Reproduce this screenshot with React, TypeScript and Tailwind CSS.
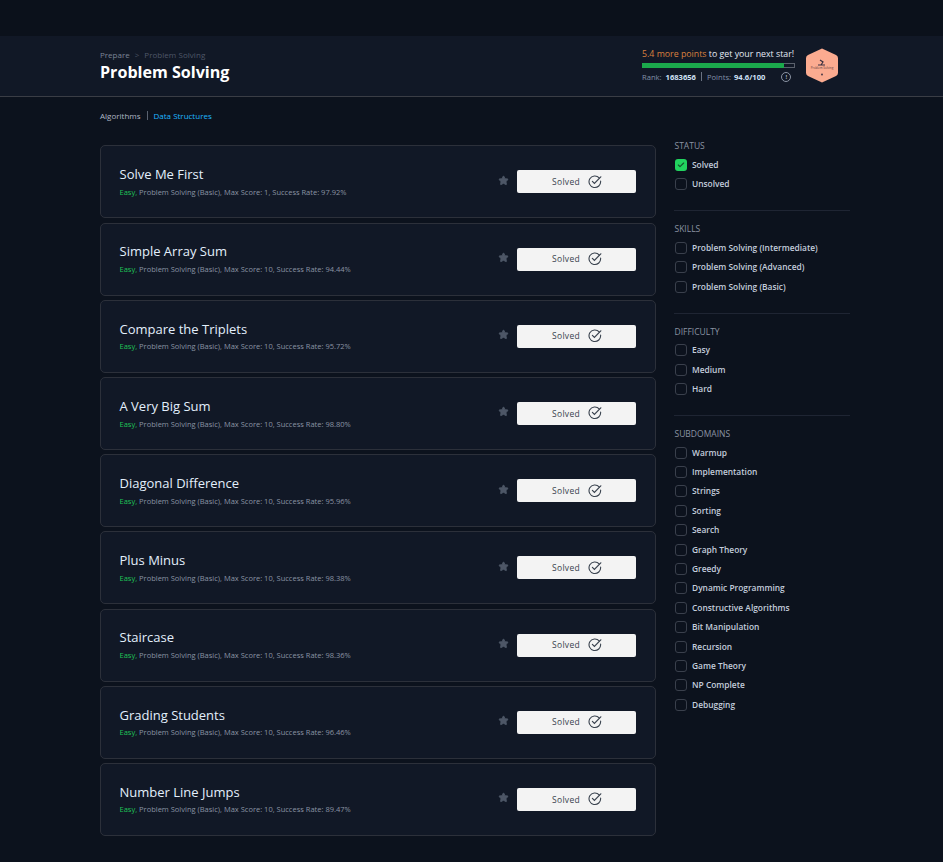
import { Check, Star } from "lucide-react";

const font = "font-['Open_Sans',sans-serif]";

const challenges = [
  { title: "Solve Me First", score: 1, rate: "97.92%" },
  { title: "Simple Array Sum", score: 10, rate: "94.44%" },
  { title: "Compare the Triplets", score: 10, rate: "95.72%" },
  { title: "A Very Big Sum", score: 10, rate: "98.80%" },
  { title: "Diagonal Difference", score: 10, rate: "95.96%" },
  { title: "Plus Minus", score: 10, rate: "98.38%" },
  { title: "Staircase", score: 10, rate: "98.36%" },
  { title: "Grading Students", score: 10, rate: "96.46%" },
  { title: "Number Line Jumps", score: 10, rate: "89.47%" },
];

const filters = [
  { name: "STATUS", items: ["Solved", "Unsolved"] },
  { name: "SKILLS", items: ["Problem Solving (Intermediate)", "Problem Solving (Advanced)", "Problem Solving (Basic)"] },
  { name: "DIFFICULTY", items: ["Easy", "Medium", "Hard"] },
  {
    name: "SUBDOMAINS",
    items: [
      "Warmup",
      "Implementation",
      "Strings",
      "Sorting",
      "Search",
      "Graph Theory",
      "Greedy",
      "Dynamic Programming",
      "Constructive Algorithms",
      "Bit Manipulation",
      "Recursion",
      "Game Theory",
      "NP Complete",
      "Debugging",
    ],
  },
];

function SolvedIcon() {
  return (
    <svg width="14" height="14" viewBox="0 0 14 14" fill="none" className="ml-[8px]">
      <path d="M11.2 2.9A5.8 5.8 0 1 0 12.6 6" stroke="#39424e" strokeWidth="1.1" strokeLinecap="round" />
      <path d="M4.4 6.4 6.4 8.4 12.8 1.8" stroke="#39424e" strokeWidth="1.2" strokeLinecap="round" />
    </svg>
  );
}

function Badge() {
  return (
    <div className="relative ml-[11px] h-[35px] w-[32px]">
      <svg width="32" height="35" viewBox="0 0 32 35" className="absolute inset-0">
        <path d="M16 0.5 30 7Q32 8 32 10V25Q32 27 30 28L16 34.5 2 28Q0 27 0 25V10Q0 8 2 7Z" fill="#fbab90" />
        <path d="M14 12 17 14 15 17M12 17H19" stroke="#3a3040" strokeWidth="1.2" fill="none" />
        <circle cx="16" cy="26.5" r="0.9" fill="#3a3040" />
      </svg>
      <div className="absolute left-0 top-[18px] w-full text-center text-[3px] leading-[4px] whitespace-nowrap text-[#5b3a3a]">
        Problem Solving
      </div>
    </div>
  );
}

function Card({ title, score, rate }: { title: string; score: number; rate: string }) {
  return (
    <div className="flex h-[73px] items-center rounded-[5px] border border-[#2c303a] bg-[#111826] pl-[18.5px] pr-[19px]">
      <div className="mb-[0.6px] flex-1">
        <div className="text-[13px] leading-[18px] text-[#e3effc]">{title}</div>
        <div className="mt-[2.8px] text-[7.5px] leading-[12px] text-[#8a93a3]">
          <span className="text-[#1fc257]">Easy,</span> Problem Solving (Basic), Max Score: {score}, Success Rate: {rate}
        </div>
      </div>
      <Star size={11} className="mb-[3px] mr-[8px] fill-[#4d5666] text-[#4d5666]" />
      <div className="flex h-[23px] w-[119px] items-center justify-center rounded-[2px] bg-[#f3f3f3] text-[8.5px] tracking-[0.3px] text-[#39424e]">
        <span className="ml-[1px] mt-[1px]">Solved</span>
        <SolvedIcon />
      </div>
    </div>
  );
}

function Filter({ label, checked }: { label: string; checked: boolean }) {
  return (
    <div className="flex h-[19.4px] items-center pl-[1px]">
      <div
        className={
          checked
            ? "flex h-[12px] w-[12px] items-center justify-center rounded-[3px] bg-[#22d35f]"
            : "h-[12px] w-[12px] rounded-[3px] border border-[#3a404c]"
        }
      >
        {checked && <Check size={8} strokeWidth={3.5} className="text-[#14532d]" />}
      </div>
      <span className="ml-[5px] text-[8.4px] font-semibold leading-[12px] text-[#c3cddc]">{label}</span>
    </div>
  );
}

export default function App() {
  return (
    <div className={`${font} min-h-[862px] bg-[#0c121d]`}>
      <div className="h-[36px] bg-[#0b111b]" />
      <header className="flex h-[61px] items-start border-b border-[#3a3d45] bg-[#111826] pl-[100px] pr-[105px]">
        <div className="flex-1 pt-[14px]">
          <div className="flex items-center text-[8px] leading-[10px] text-[#697283]">
            <span className="text-[#7c8596]">Prepare</span>
            <span className="mx-[5px] text-[#4a5161]">&gt;</span>
            <span className="tracking-[0.05px] text-[#4f5768]">Problem Solving</span>
          </div>
          <div className="mt-[1px] text-[16.1px] font-bold leading-[22px] text-white">Problem Solving</div>
        </div>
        <div className="flex items-center pt-[12px]">
          <div className="w-[153px]">
            <div className="text-[8.8px] leading-[11px] whitespace-nowrap text-[#e4ebf5]">
              <span className="text-[#d9803f]">5.4 more points</span> to get your next star!
            </div>
            <div className="mt-[3px] flex h-[5px]">
              <div className="h-full w-[142px] bg-[#1ba94c]" />
              <div className="h-full flex-1 border border-l-0 border-[#5a606c]" />
            </div>
            <div className="mt-[3px] flex items-center text-[7.6px] leading-[12px] text-[#8290a6]">
              <span>Rank:</span>
              <span className="ml-[4px] font-bold text-[#cfe0f5]">1683656</span>
              <span className="mx-[5px] h-[9px] w-px bg-[#6a7282]" />
              <span>Points:</span>
              <span className="ml-[3px] font-bold text-[#cfe0f5]">94.6/100</span>
              <span className="ml-[16px] flex h-[10px] w-[10px] items-center justify-center rounded-full border-[1.5px] border-[#8a93a3] text-[6px] font-bold leading-none text-[#a0a9b8]">
                !
              </span>
            </div>
          </div>
          <Badge />
        </div>
      </header>
      <div className="flex h-[48.4px] items-start pl-[100px] pt-[13px] text-[8px] leading-[11px]">
        <span className="text-[#aeb8c6]">Algorithms</span>
        <span className="mx-[6px] mt-[1px] h-[9px] w-px bg-[#5a6270]" />
        <span className="text-[#1fb6ff]">Data Structures</span>
      </div>
      <main className="flex pl-[100px]">
        <div className="flex w-[556px] flex-col gap-[4.2px]">
          {challenges.map((c) => (
            <Card key={c.title} {...c} />
          ))}
        </div>
        <aside className="ml-[18px] -mt-[6.4px] w-[176px]">
          {filters.map((group, i) => (
            <div key={group.name} className={i > 0 ? "mt-[16.3px] border-t border-[#1f2533] pt-[11px]" : ""}>
              <div className="mb-[2px] pl-[0.5px] text-[8.5px] leading-[14px] text-[#8a93a3]">{group.name}</div>
              {group.items.map((item) => (
                <Filter key={item} label={item} checked={group.name === "STATUS" && item === "Solved"} />
              ))}
            </div>
          ))}
        </aside>
      </main>
    </div>
  );
}
